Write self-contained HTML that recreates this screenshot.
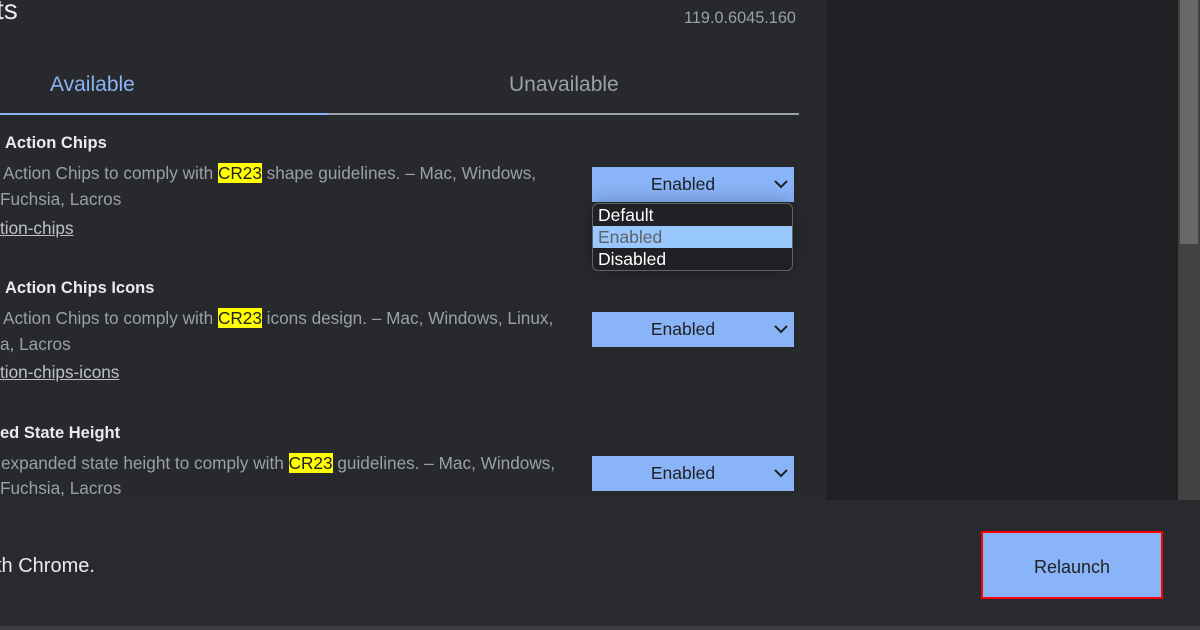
<!DOCTYPE html>
<html><head><style>
body{margin:0;width:1200px;height:630px;overflow:hidden;background:#292a2d;font-family:"Liberation Sans",sans-serif;position:relative}
.a{position:absolute;white-space:nowrap}
.t{color:#e8eaed;font-weight:bold;font-size:16.5px}
.d{color:#9aa0a6;font-size:17.2px}
.l{color:#bdc1c6;font-size:17.2px;text-decoration:underline}
.h{background:#ffff00;color:#202124}
.sel{position:absolute;left:592px;width:202px;height:35px;background:#8ab4f8;color:#202124;font-size:17.5px;line-height:35px;text-align:center;box-sizing:border-box;padding-right:20px}
.sel svg{position:absolute;right:6px;top:13px}
</style></head><body>
<div class="a" style="left:0;top:0;width:826px;height:500px;background:#28292c"></div>
<div class="a" style="left:826px;top:0;width:352px;height:500px;background:#202124"></div>
<div class="a" style="left:1178px;top:0;width:22px;height:500px;background:#424242"></div>
<div class="a" style="left:1180px;top:0;width:18px;height:244px;background:#686868"></div>
<div class="a" style="left:0;top:626px;width:1200px;height:4px;background:#3c3d40"></div>

<div class="a" style="left:-4px;top:-6px;color:#e8eaed;font-size:28px">ts</div>
<div class="a" style="left:684px;top:9px;color:#9aa0a6;font-size:16.3px">119.0.6045.160</div>
<div class="a" style="left:50px;top:73px;color:#8ab4f8;font-size:21px">Available</div>
<div class="a" style="left:509px;top:73px;color:#9aa0a6;font-size:21px">Unavailable</div>
<div class="a" style="left:0;top:113px;width:799px;height:2px;background:#9aa0a6"></div>
<div class="a" style="left:0;top:113px;width:328px;height:2px;background:#8ab4f8"></div>

<div class="a t" style="left:5px;top:134px">Action Chips</div>
<div class="a d" style="left:3px;top:163px">Action Chips to comply with <span class="h">CR23</span> shape guidelines. – Mac, Windows,</div>
<div class="a d" style="left:0;top:189px">Fuchsia, Lacros</div>
<div class="a l" style="left:0;top:218px">tion-chips</div>

<div class="a t" style="left:5px;top:279px">Action Chips Icons</div>
<div class="a d" style="left:3px;top:308px">Action Chips to comply with <span class="h">CR23</span> icons design. – Mac, Windows, Linux,</div>
<div class="a d" style="left:0;top:334px">a, Lacros</div>
<div class="a l" style="left:0;top:362px">tion-chips-icons</div>

<div class="a t" style="left:0;top:424px">ed State Height</div>
<div class="a d" style="left:1px;top:453px">expanded state height to comply with <span class="h">CR23</span> guidelines. – Mac, Windows,</div>
<div class="a d" style="left:0;top:478px">Fuchsia, Lacros</div>

<div class="sel" style="top:167px">Enabled<svg width="14" height="9"><path d="M1 1l6 6 6-6" stroke="#202124" stroke-width="2" fill="none"/></svg></div>
<div class="sel" style="top:312px">Enabled<svg width="14" height="9"><path d="M1 1l6 6 6-6" stroke="#202124" stroke-width="2" fill="none"/></svg></div>
<div class="sel" style="top:456px">Enabled<svg width="14" height="9"><path d="M1 1l6 6 6-6" stroke="#202124" stroke-width="2" fill="none"/></svg></div>

<div class="a" style="left:592px;top:203px;width:199px;height:66px;background:#202124;border:1px solid #5f6368;border-radius:6px;overflow:hidden;font-size:17.5px;line-height:22px;box-shadow:0 0 20px rgba(0,0,0,.3)">
<div style="padding-left:5px;color:#fff">Default</div>
<div style="padding-left:5px;color:#5f6368;background:#99c8ff">Enabled</div>
<div style="padding-left:5px;color:#fff">Disabled</div>
</div>

<div class="a" style="left:-4px;top:555px;color:#e8eaed;font-size:20px">th Chrome.</div>
<div class="a" style="left:981px;top:531px;width:178px;height:64px;border:2px solid #ff0000;background:#8ab4f8;color:#202124;font-size:18px;line-height:68px;text-align:center">Relaunch</div>
</body></html>
